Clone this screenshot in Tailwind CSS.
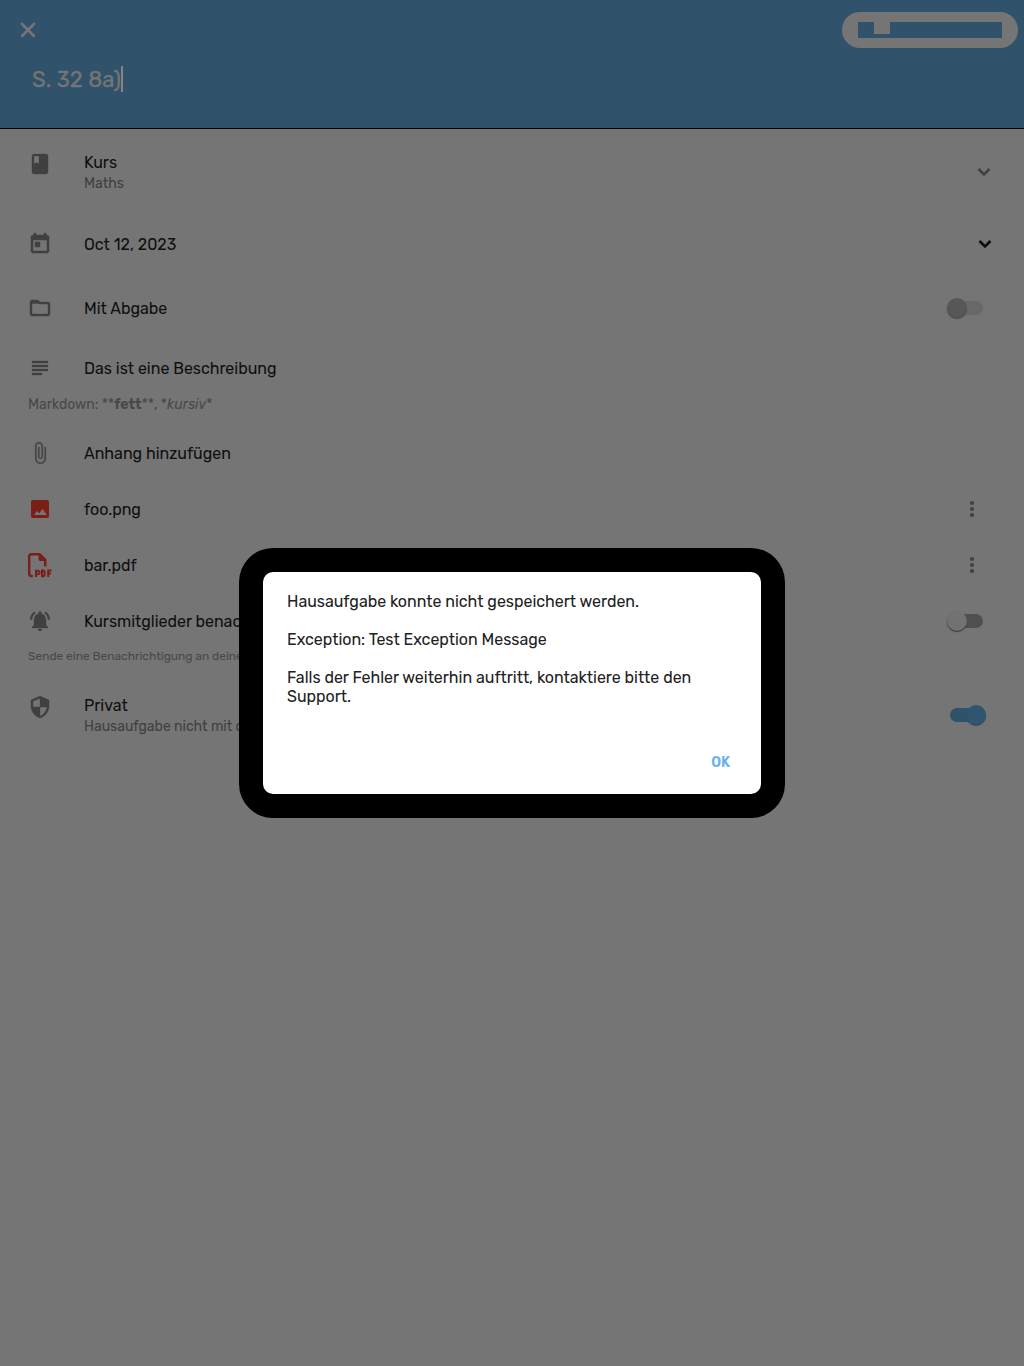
<!DOCTYPE html>
<html lang="de">
<head>
<meta charset="utf-8">
<title>Hausaufgabe</title>
<script src="https://cdn.jsdelivr.net/npm/@tailwindcss/browser@4"></script>
</head>
<body class="relative h-[1366px] w-[1024px] overflow-hidden bg-[#757575] font-[Rubik,Roboto,sans-serif] text-base tracking-[-0.025px] text-[#0f0f0f]">
<header class="flex h-[129px] flex-col border-b border-black bg-[#30526a] text-[#757575]">
  <div class="flex h-[60px] items-center justify-between pl-4 pr-1.5">
    <svg class="size-6" viewBox="0 0 24 24" fill="none" stroke="currentColor" stroke-width="2.6" stroke-linecap="round"><path d="M6 6l12 12M18 6L6 18"/></svg>
    <div class="flex h-9 w-44 items-center rounded-full bg-[#757575] px-4">
      <svg class="h-4 w-36" viewBox="0 0 144 16"><path fill="#30526a" d="M0 0h16v12h16V0h112v16H0z"/></svg>
    </div>
  </div>
  <div class="flex h-[38px] items-center pl-8">
    <span class="whitespace-nowrap text-[22px] font-normal tracking-normal [-webkit-text-stroke:0.3px]">S. 32 8a)</span>
    <span class="h-[26px] w-0.5 bg-[#858585]"></span>
  </div>
</header>
<main class="pt-[7px] whitespace-nowrap">
  <div class="flex h-[72px] items-center gap-8 pl-7 pr-7">
    <svg class="mb-4 size-6 text-[#404040]" viewBox="0 0 24 24" fill="currentColor" stroke="currentColor" stroke-width=".3"><path d="M18 2H6c-1.1 0-2 .9-2 2v16c0 1.100.9 2 2 2h12c1.100 0 2-.9 2-2V4c0-1.100-.9-2-2-2zM6 4h5v8l-2.500-1.500L6 12V4z"/></svg>
    <div class="flex-1 pt-0.5"><div class="h-[21px] leading-[21px]">Kurs</div><div class="h-[21px] text-sm leading-[21px] text-[#404040]">Maths</div></div>
    <svg class="size-6 text-[#404040]" viewBox="0 0 24 24" fill="none" stroke="currentColor" stroke-width="2.6"><path d="M6.500 9L12 14.500l5.500-5.500"/></svg>
  </div>
  <div class="mt-2 flex h-14 items-center gap-8 pl-7 pr-[27px]">
    <svg class="size-6 text-[#404040]" viewBox="0 0 24 24" fill="currentColor" stroke="currentColor" stroke-width=".5"><path d="M19 3h-1V1h-2v2H8V1H6v2H5c-1.110 0-2 .9-2 2v14c0 1.100.89 2 2 2h14c1.100 0 2-.9 2-2V5c0-1.100-.9-2-2-2zm0 16H5V8h14v11zM7 10h5v5H7z"/></svg>
    <div class="flex-1 pt-0.5">Oct 12, 2023</div>
    <svg class="size-6" viewBox="0 0 24 24" fill="none" stroke="currentColor" stroke-width="2.6"><path d="M6.500 9L12 14.500l5.500-5.500"/></svg>
  </div>
  <div class="mt-2 flex h-14 items-center gap-8 pl-7 pr-[41px]">
    <svg class="size-6 text-[#404040]" viewBox="0 0 24 24" fill="currentColor" stroke="currentColor" stroke-width=".4"><path d="M9.170 6l2 2H20v10H4V6h5.170M10 4H4c-1.100 0-1.990.9-1.990 2L2 18c0 1.100.9 2 2 2h16c1.100 0 2-.9 2-2V8c0-1.100-.9-2-2-2h-8l-2-2z"/><path d="M4 4.500h5.500L12 7.500H4z"/></svg>
    <div class="flex-1 pt-0.5">Mit Abgabe</div>
    <div class="flex h-3.5 w-[33px] items-center rounded-full bg-[#686868]"><span class="-ml-[3px] size-5 shrink-0 rounded-full bg-[#575757] shadow-[0_1px_1px_#444]"></span></div>
  </div>
  <div class="mt-2 flex h-12 items-center gap-8 pl-7">
    <svg class="size-6 text-[#404040]" viewBox="0 0 24 24" fill="currentColor" stroke="currentColor" stroke-width=".3"><path d="M4 5h16v2H4zm0 4h16v2H4zm0 4h16v2H4zm0 4h10v2H4z"/></svg>
    <div class="pt-0.5">Das ist eine Beschreibung</div>
  </div>
  <div class="h-[33px] pl-7 pt-px text-sm leading-6 text-[#484848]">Markdown: **<b>fett</b>**, *<i>kursiv</i>*</div>
  <div class="flex h-14 items-center gap-8 pl-7">
    <svg class="size-6 text-[#484848]" viewBox="0 0 24 24" fill="currentColor" stroke="currentColor" stroke-width=".3"><path d="M16.500 6v11.500c0 2.210-1.790 4-4 4s-4-1.790-4-4V5c0-1.380 1.120-2.500 2.500-2.500s2.500 1.120 2.500 2.500v10.500c0 .55-.45 1-1 1s-1-.45-1-1V6H10v9.500c0 1.380 1.120 2.500 2.500 2.500s2.500-1.120 2.500-2.500V5c0-2.210-1.790-4-4-4S7 2.790 7 5v12.500c0 3.040 2.460 5.500 5.500 5.500s5.500-2.460 5.500-5.500V6h-1.500z"/></svg>
    <div class="pt-0.5">Anhang hinzufügen</div>
  </div>
  <div class="flex h-14 items-center gap-8 pl-7 pr-10">
    <svg class="size-6 text-[#7a1e18]" viewBox="0 0 24 24" fill="currentColor"><path d="M21 19V5c0-1.100-.9-2-2-2H5c-1.100 0-2 .9-2 2v14c0 1.100.9 2 2 2h14c1.100 0 2-.9 2-2zM6 18l3-4 2.200 2.600L14.500 12 19 18z"/></svg>
    <div class="flex-1 pt-0.5">foo.png</div>
    <svg class="size-6 text-[#404040]" viewBox="0 0 24 24" fill="currentColor"><circle cx="12" cy="6" r="2.100"/><circle cx="12" cy="12" r="2.100"/><circle cx="12" cy="18" r="2.100"/></svg>
  </div>
  <div class="flex h-14 items-center gap-8 pl-7 pr-10">
    <svg class="size-6 overflow-visible text-[#7a1e18]" viewBox="0 0 24 24" fill="none" stroke="currentColor" stroke-width="2.400"><path d="M4.800 23H3.500Q1.200 23 1.200 20.500V3.500Q1.200 1.200 3.500 1.200H11.500L17.200 7V13.500"/><path fill="currentColor" stroke="none" d="M10.500 .5H12.500L18.400 6.500V8H12.500Q10.500 8 10.500 6z"/><path stroke-width="2" d="M8 24v-6.200h1.800a1.700 1.700 0 0 1 0 3.500H8M14 17.600v5.600h.8q1.900 0 1.900-1.900v-1.800q0-1.900-1.900-1.900zM20.200 24v-6.400h3.300M20.200 20.600h2.800"/></svg>
    <div class="flex-1 pt-0.5">bar.pdf</div>
    <svg class="size-6 text-[#404040]" viewBox="0 0 24 24" fill="currentColor"><circle cx="12" cy="6" r="2.100"/><circle cx="12" cy="12" r="2.100"/><circle cx="12" cy="18" r="2.100"/></svg>
  </div>
  <div class="flex h-14 items-center gap-8 pl-7 pr-[41px]">
    <svg class="size-6 text-[#404040]" viewBox="0 0 24 24" fill="currentColor" stroke="currentColor" stroke-width=".3"><path d="M7.580 4.080L6.150 2.650C3.750 4.480 2.170 7.300 2.030 10.500h2c.15-2.650 1.510-4.970 3.550-6.420zm12.390 6.420h2c-.15-3.200-1.730-6.020-4.120-7.850l-1.420 1.430c2.020 1.450 3.390 3.770 3.540 6.420zM18 11c0-3.070-1.640-5.640-4.500-6.320V4c0-.83-.67-1.500-1.500-1.500s-1.500.67-1.500 1.500v.68C7.630 5.360 6 7.920 6 11v5l-2 2v1h16v-1l-2-2v-5zm-6 11c1.100 0 2-.9 2-2h-4c0 1.100.9 2 2 2z"/></svg>
    <div class="flex-1 pt-0.5">Kursmitglieder benachrichtigen</div>
    <div class="flex h-3.5 w-[33px] items-center rounded-full bg-[#505050]"><span class="-ml-[3px] size-5 shrink-0 rounded-full bg-[#727272] shadow-[0_1px_1px_#333]"></span></div>
  </div>
  <div class="h-[30px] pl-7 text-xs leading-[14px] text-[#484848]">Sende eine Benachrichtigung an deine Kursmitglieder.</div>
  <div class="flex h-[72px] items-center gap-8 pl-7 pr-[41px]">
    <svg class="mb-4 size-6 text-[#404040]" viewBox="0 0 24 24" fill="currentColor" stroke="currentColor" stroke-width=".4"><path d="M12 1L3 5v6c0 5.550 3.840 10.740 9 12 5.160-1.260 9-6.450 9-12V5l-9-4zm0 10.990h7c-.53 4.120-3.280 7.790-7 8.940V12H5V6.300l7-3.110v8.800z"/></svg>
    <div class="flex-1 pt-0.5"><div class="h-[21px] leading-[21px]">Privat</div><div class="h-[21px] text-sm leading-[21px] text-[#404040]">Hausaufgabe nicht mit dem Kurs teilen.</div></div>
    <div class="flex h-3.5 w-[33px] items-center justify-end rounded-full bg-[#30526a]"><span class="-mr-[3px] size-5 shrink-0 rounded-full bg-[#30566f] shadow-[0_1px_1px_#29465b]"></span></div>
  </div>
</main>
<section class="absolute left-[239px] top-[548px] flex h-[270px] w-[546px] rounded-[34px] bg-black p-6">
  <div class="flex flex-1 flex-col rounded-[10px] bg-white px-6 pt-5 text-base leading-[19px] text-[#212121]">
    <p class="whitespace-nowrap">Hausaufgabe konnte nicht gespeichert werden.</p>
    <p class="mt-[19px] whitespace-nowrap">Exception: Test Exception Message</p>
    <p class="mt-[19px] whitespace-nowrap">Falls der Fehler weiterhin auftritt, kontaktiere bitte den<br>Support.</p>
    <button class="mt-[47px] self-end pr-[7px] text-sm font-semibold text-[#68b3e9]">OK</button>
  </div>
</section>
</body>
</html>
